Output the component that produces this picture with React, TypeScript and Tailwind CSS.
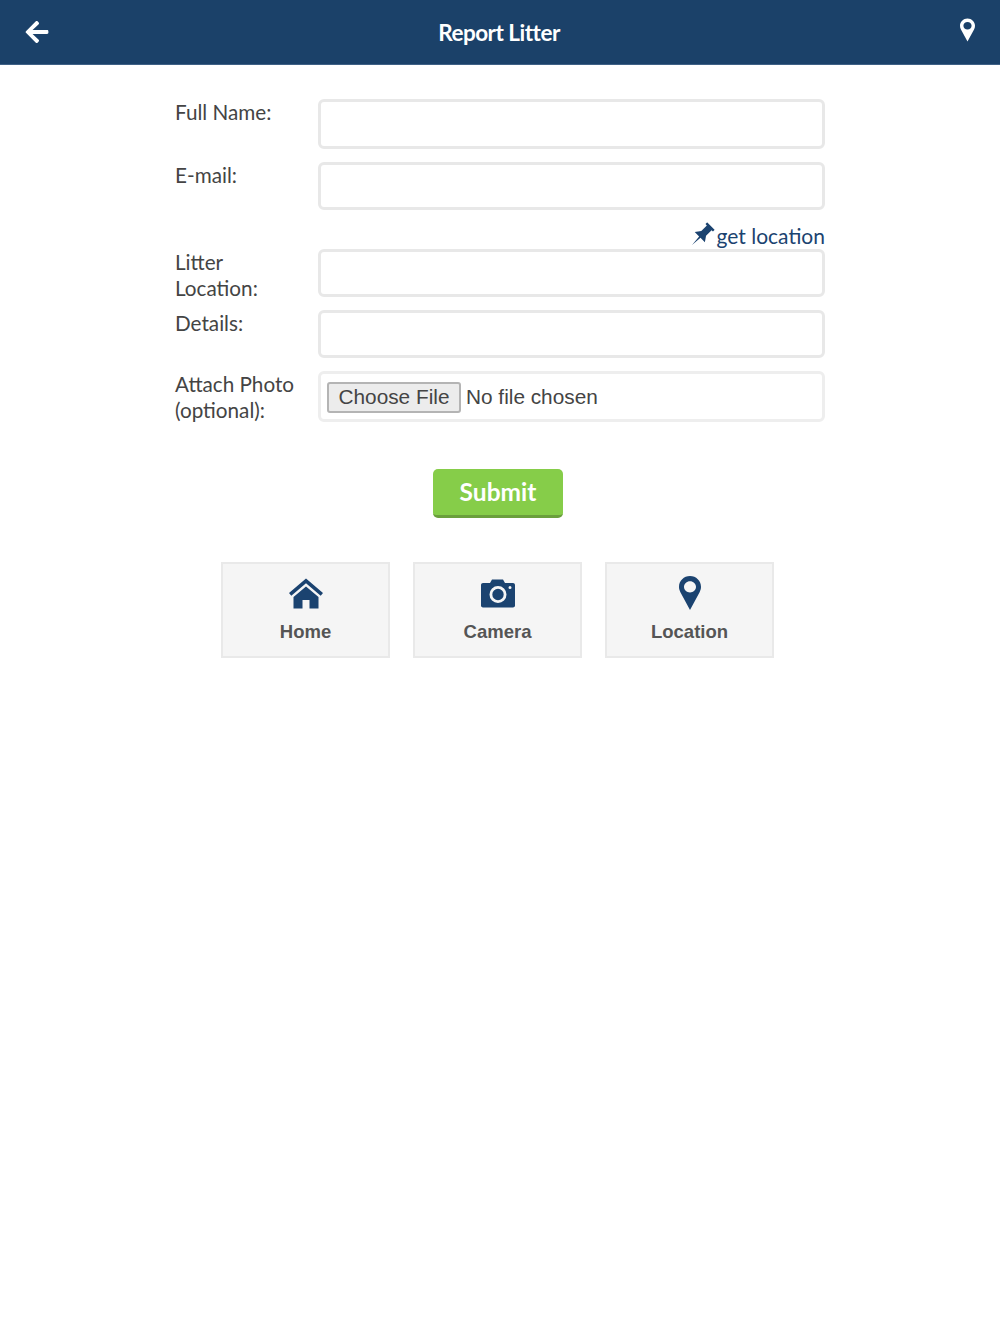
import { FaArrowLeft } from "react-icons/fa";

function Pin({ className }: { className: string }) {
  return (
    <svg viewBox="0 0 22 34" className={className} fill="currentColor">
      <path fillRule="evenodd" d="M11 0C4.9 0 0 4.8 0 10.8c0 2 .5 3.7 1.4 5.4L11 34l9.600-17.800c.9-1.700 1.400-3.400 1.400-5.400C22 4.800 17.100 0 11 0zm0 5.200c3.300 0 6 2.500 6 5.600s-2.700 5.600-6 5.600-6-2.500-6-5.600 2.700-5.600 6-5.600z" />
    </svg>
  );
}

function Tack() {
  return (
    <svg viewBox="0 0 24 28" className="w-[23px] h-[27px] rotate-45 mr-[4px] -mt-[3px]" fill="currentColor">
      <path d="M6.500 0h11v2.600h-2v8.200l4 5.700H13L12 28l-1-11.500H4.500l4-5.700V2.600h-2z" />
    </svg>
  );
}

function HomeIcon() {
  return (
    <svg viewBox="0 0 34 30" className="w-[34px] h-[31px] text-[#1b4370]" fill="currentColor">
      <path d="M17 0 0 14.500l2.300 2.700L17 4.800l14.700 12.400 2.300-2.700z" />
      <path fillRule="evenodd" d="M17 8 4.500 18.500V30h9v-8.500h7V30h9V18.500z" />
    </svg>
  );
}

function CameraIcon() {
  return (
    <svg viewBox="0 0 34 28" className="w-[34px] h-[29px] text-[#1b4370]" fill="currentColor">
      <path fillRule="evenodd" d="M11 0h11l2 3.500h8c1.100 0 2 .9 2 2V26c0 1.100-.9 2-2 2H2c-1.100 0-2-.9-2-2V5.500c0-1.100.9-2 2-2h7zM17 6.500a8.500 8.500 0 1 0 0 17 8.500 8.500 0 0 0 0-17zm0 2.800a5.700 5.700 0 1 1 0 11.400 5.700 5.700 0 0 1 0-11.400zM29 6.500a1.500 1.500 0 1 0 0 3 1.500 1.500 0 0 0 0-3z" />
    </svg>
  );
}

function Field({ label, rowClass }: { label: string; rowClass: string }) {
  return (
    <div className={`flex ${rowClass}`}>
      <label className="w-[143px] pr-3 text-[20.700px] leading-[26px] text-[#444]">{label}</label>
      <input
        type="text"
        className="w-[507px] h-full rounded-[6px] border-[3px] border-[#e8e8e8] bg-white"
      />
    </div>
  );
}

function Tile({ label, icon }: { label: string; icon: React.ReactNode }) {
  return (
    <a
      href="#"
      className="w-[169px] h-[96px] flex flex-col items-center bg-[#f5f5f5] border-2 border-[#e9e9e9] text-[#444]"
    >
      <div className="h-[50px] mt-[4px] flex items-center justify-center">{icon}</div>
      <span className="mt-[2px] text-[18.500px] leading-[24px] font-bold font-['Liberation_Sans',sans-serif] text-[#555]">
        {label}
      </span>
    </a>
  );
}

export default function App() {
  return (
    <div className="min-h-[1334px] bg-white font-['Lato',sans-serif]">
      <header className="h-[65px] flex items-center justify-between bg-[#1b4169] border-b border-[#3f6186] pl-[24px] pr-[25px] text-white">
        <FaArrowLeft className="w-[26px] h-[26px] -mt-[1px]" />
        <h1 className="text-[22.500px] font-bold tracking-[-0.5px] ml-[-12px] mt-[1px]">Report Litter</h1>
        <Pin className="w-[15px] h-[24px] -mt-[5px]" />
      </header>

      <form className="w-[650px] ml-[175px]">
        <Field label="Full Name:" rowClass="h-[50px] mt-[34px]" />
        <Field label="E-mail:" rowClass="h-[48px] mt-[13px]" />
        <div className="w-[650px] h-[25px] mt-[14px] flex items-center justify-end text-[#1b4370] text-[21px] leading-[25px]">
          <Tack />
          <span className="-mt-[2px]">get location</span>
        </div>
        <Field label="Litter Location:" rowClass="h-[48px]" />
        <Field label="Details:" rowClass="h-[48px] mt-[13px]" />
        <div className="flex mt-[13px]">
          <label className="w-[143px] pr-3 text-[20.700px] leading-[26px] text-[#444]">
            Attach Photo (optional):
          </label>
          <div className="w-[507px] h-[51px] rounded-[6px] border-[3px] border-[#eeeeee] flex items-center pl-[6px] font-['Liberation_Sans',sans-serif] text-[20.800px] text-[#444]">
            <button
              type="button"
              className="w-[134px] h-[31px] mt-[1px] rounded-[3px] border-2 border-[#b4b4b4] bg-[#ececec] text-[20.800px] leading-none text-[#444]"
            >
              Choose File
            </button>
            <span className="ml-[5px]">No file chosen</span>
          </div>
        </div>
        <div className="w-[646px] flex justify-center mt-[46px]">
          <button
            type="button"
            className="w-[130px] h-[49px] rounded-[5px] bg-[#86cd49] border-b-[3px] border-[#6a9f3c] text-white text-[24.500px] font-bold"
          >
            Submit
          </button>
        </div>
      </form>

      <nav className="flex justify-start gap-[23px] ml-[221px] mt-[44px]">
        <Tile label="Home" icon={<HomeIcon />} />
        <Tile label="Camera" icon={<CameraIcon />} />
        <Tile label="Location" icon={<Pin className="w-[22px] h-[34px] text-[#1b4370]" />} />
      </nav>
    </div>
  );
}
